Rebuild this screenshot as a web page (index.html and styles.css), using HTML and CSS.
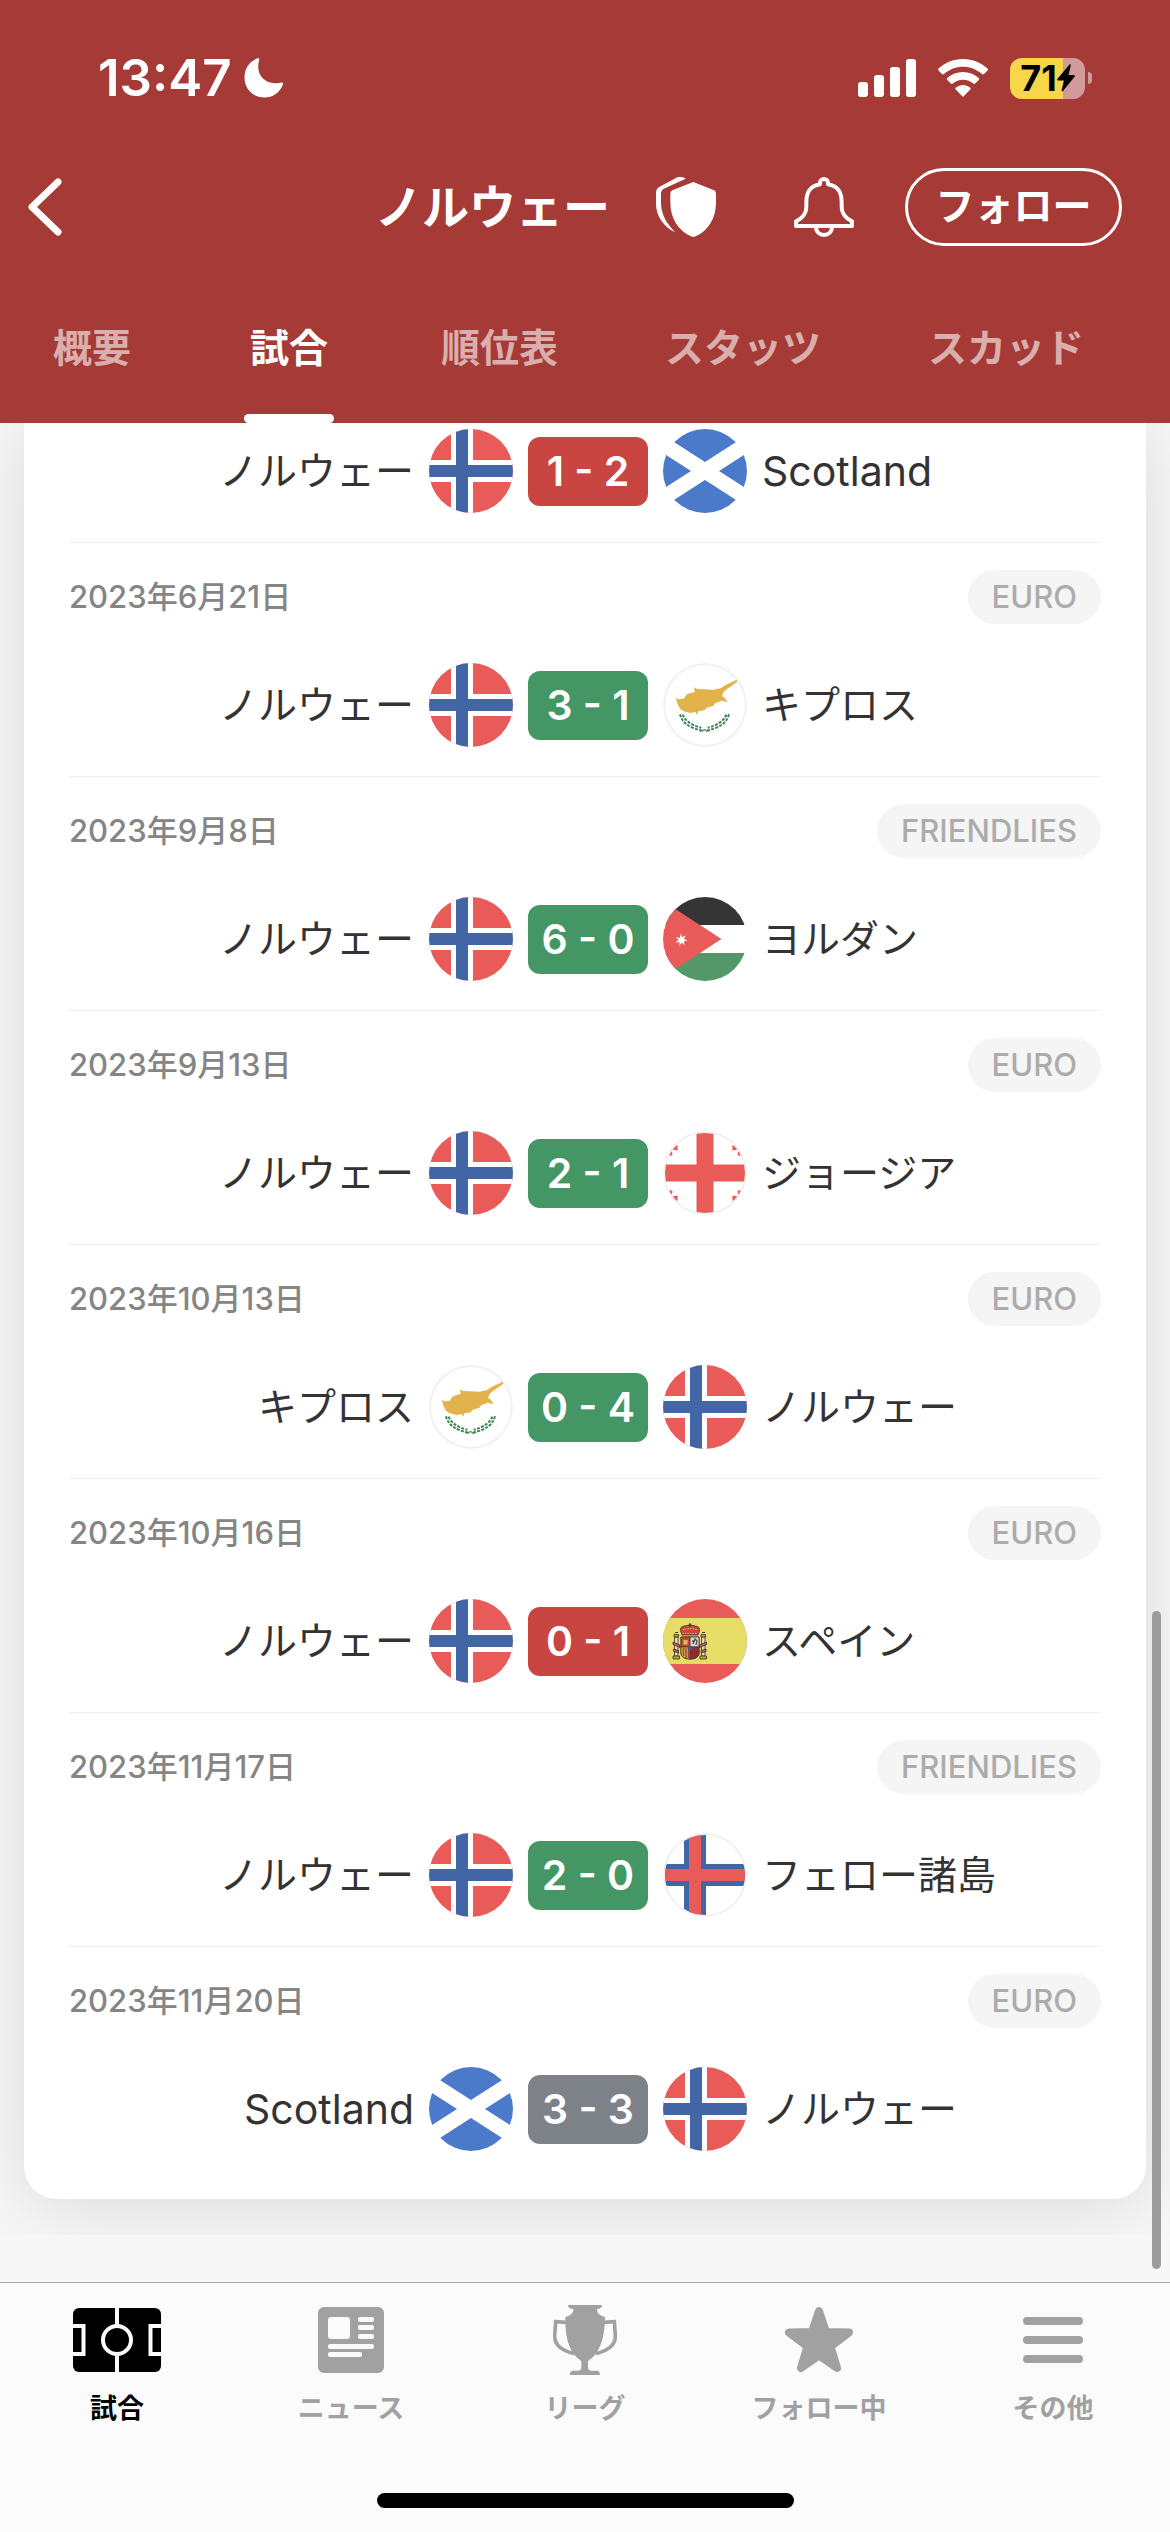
FILE: index.html
```html
<!DOCTYPE html>
<html lang="ja">
<head>
<meta charset="utf-8">
<meta name="viewport" content="width=device-width, initial-scale=1">
<title>ノルウェー - 試合</title>
<link rel="stylesheet" href="styles.css">
</head>
<body>
<svg class="sprite" aria-hidden="true">
  <defs>
    <clipPath id="disc"><circle cx="42" cy="42" r="40"/></clipPath>
    <symbol id="norway" viewBox="0 0 84 84">
      <path fill="#e95b59" d="M0 0h84v84H0z"/>
      <path fill="#fff" d="M22 0h22v84H22zM0 31h84v22H0z"/>
      <path fill="#4165a5" d="M27 0h12v84H27zM0 36h84v12H0z"/>
    </symbol>
    <symbol id="scotland" viewBox="0 0 84 84">
      <path fill="#fff" d="M0 0h84v84H0z"/>
      <path fill="#4c7acb" d="M0 0v6l42 27L84 6V0zM0 84v-6l42-27 42 27v6zM0 24l28 18L0 60zM84 24L56 42l28 18z"/>
    </symbol>
    <symbol id="cyprus" viewBox="0 0 84 84">
      <circle cx="42" cy="42" r="42" fill="#f0f0f0"/>
      <circle cx="42" cy="42" r="40" fill="#fff"/>
      <g transform="scale(.33333) translate(-88 -75)">
        <path fill="#e2b24c" d="M126 179l8 5 16-1 7-11 6-5 20-5-2-14 9 5 50 2 22-5 12-8 34-16 3 2-2 5-36 25-6 10-1 7 8 5 8 13-11-3-8-2-9 5-9 1-5 9-21 6-6 8-19 3-4 11-4-9-15 3-21-5-11-8-7-14z"/>
        <path fill="none" stroke="#3b8454" stroke-width="6" stroke-dasharray="9 4" d="M139 229C145 252 162 268 205 278M286 229C280 252 263 268 220 278"/>
        <path fill="none" stroke="#3b8454" stroke-width="6" stroke-dasharray="9 4" d="M147 230C153 247 172 262 203 269M278 230C272 247 253 262 222 269"/>
        <path fill="none" stroke="#3b8454" stroke-width="4" d="M206 281c2-8 11-8 13 0"/>
      </g>
    </symbol>
    <symbol id="jordan" viewBox="0 0 84 84">
      <path fill="#fff" d="M0 0h84v84H0z"/>
      <path fill="#353535" d="M0 0h84v28H0z"/>
      <path fill="#54986a" d="M0 56h84v28H0z"/>
      <path fill="#e95b59" d="M0 4l58.500 38L0 80z"/>
      <path fill="#fff" d="M17.700 36.500l1.400 3.700 3.700-1.800-1.900 3.600 3.800 1.500-4 .9 1.200 3.900-3.200-2.500-2.300 3.300v-4l-4 .3 3.300-2.400-2.900-2.900 4 1z"/>
    </symbol>
    <symbol id="georgia" viewBox="0 0 84 84">
      <circle cx="42" cy="42" r="42" fill="#f0f0f0"/>
      <circle cx="42" cy="42" r="40" fill="#fff"/>
      <g clip-path="url(#disc)" fill="#e95b59">
        <path d="M33.500 0h17v84h-17zM0 33.500h84v17H0z"/>
        <path id="bolnisi" d="M14.600 14v5.500L9 18.500l1.500-1.500-.5-3 2.500 1.300zM5.500 20.500l3.500.2.500 3.500-3 .8z"/>
        <use href="#bolnisi" transform="matrix(-1 0 0 1 84 0)"/>
        <use href="#bolnisi" transform="matrix(1 0 0 -1 0 84)"/>
        <use href="#bolnisi" transform="matrix(-1 0 0 -1 84 84)"/>
      </g>
    </symbol>
    <symbol id="spain" viewBox="0 0 84 84">
      <path fill="#e95b59" d="M0 0h84v84H0z"/>
      <path fill="#e6dd67" d="M0 19h84v46H0z"/>
      <g stroke="#3d3328" stroke-width=".8">
        <path fill="#d9d9d4" d="M11.500 38h3.500v19h-3.500zM38.500 38H42v19h-3.500z"/>
        <path fill="#b9a03c" d="M11 35.500h4.500V38H11zM38 35.500h4.500V38H38zM10 57h6.500v3H10zM37 57h6.500v3H37z"/>
        <path fill="#d1504c" d="M10 43l7 3v2.500l-7-3zM43.500 43l-7 3v2.500l7-3zM10.500 50l5 1.500V54l-5-1.500zM43 50l-5 1.500V54l5-1.500z"/>
        <path fill="#a5403c" d="M18 38h18v16c0 4-4 6-9 6s-9-2-9-6z"/>
        <path fill="#c9473f" d="M18 38h9v10h-9z"/>
        <path fill="#dcd3d6" d="M27 38h9v10h-9z"/>
        <path fill="#d8b04a" d="M18 48h9v12c-5 0-9-2-9-6z"/>
        <path fill="#8c2f35" d="M27 48h9v6c0 4-4 6-9 6z"/>
        <path fill="#c9473f" d="M18 33c-2-4 1-6 4-6 2-1 8-1 10 0 3 0 6 2 4 6l-1 3H19z"/>
      </g>
      <path fill="none" stroke="#a5403c" stroke-width="1.400" d="M20.500 49v8M23 49v10M25.500 49v10"/>
      <path fill="#e0bb4c" d="M20.500 41h4v4.500h-4z"/>
      <path fill="none" stroke="#5b4a58" stroke-width="1.300" d="M30 45l2-5 2 2-1 4M29 42h3"/>
      <path fill="none" stroke="#d8b04a" stroke-width="1.200" stroke-dasharray="1.500 1" d="M19.500 34.500h15M20 31c3-2 11-2 14 0"/>
      <path fill="none" stroke="#3d3328" stroke-width="1.100" d="M27 24v4M25.500 26h3M12 33.500h3M39 33.500h3"/>
      <circle cx="27" cy="49" r="2" fill="#3f5b9c"/>
    </symbol>
    <symbol id="faroe" viewBox="0 0 84 84">
      <circle cx="42" cy="42" r="42" fill="#f0f0f0"/>
      <circle cx="42" cy="42" r="40" fill="#fff"/>
      <g clip-path="url(#disc)">
        <path fill="#4165a5" d="M21 0h22v84H21zM0 31h84v22H0z"/>
        <path fill="#e95b59" d="M26 0h12v84H26zM0 36h84v12H0z"/>
      </g>
    </symbol>
  </defs>
</svg>

<header class="header">
  <div class="status">
    <div class="status-group">
      <span class="clock">13:47</span>
      <svg class="moon" viewBox="0 0 40 40" aria-hidden="true"><path fill="#fff" d="M13.500.3c1.300-.5 2.200.4 1.700 1.700C11 15.500 20 28 36.500 24.700c1.900-.4 2.900.5 2.300 2C35.500 35 28.500 39.500 20.500 39.500 9 39.500.5 31 .5 19.500.5 10.500 5.500 3.300 13.500.3z"/></svg>
    </div>
    <div class="status-group status-right">
      <svg class="signal" viewBox="0 0 58 38" aria-hidden="true"><g fill="#fff"><rect y="23" width="10" height="15" rx="3"/><rect x="16" y="16" width="10" height="22" rx="3"/><rect x="32" y="8" width="10" height="30" rx="3"/><rect x="48" width="10" height="38" rx="3"/></g></svg>
      <svg class="wifi" viewBox="0 0 50 38" aria-hidden="true"><g fill="#fff"><path d="M25 0C34.500 0 43 3.700 49.500 9.500q.8 1 0 2L46 15q-1 .8-2 0C38.500 10.200 32 7.700 25 7.700S11.500 10.200 6 15q-1 .8-2 0L.5 11.500q-.8-1 0-2C7 3.700 15.500 0 25 0z"/><path d="M25 13c6 0 11.500 2.200 15.700 6 .7.700.7 1.300 0 2l-3.500 3.500q-1 .8-2 0C32.500 22 29 20.700 25 20.700s-7.500 1.300-10.200 3.800q-1 .8-2 0L9.300 21c-.7-.7-.7-1.300 0-2C13.500 15.200 19 13 25 13z"/><path d="M25 26c2.700 0 5 .9 7 2.500.8.700.8 1.300.2 2L26 37q-1 1-2 0l-6.200-6.500c-.6-.7-.6-1.300.2-2C20 26.900 22.300 26 25 26z"/></g></svg>
      <div class="battery">
        <div class="battery-body">
          <span>71</span>
          <svg class="bolt" viewBox="0 0 18 28" aria-hidden="true"><path d="M12.500.5c.8-.8 1.600-.2 1.300.8L11.500 11h5.200c1.200 0 1.600.8.900 1.800L6 27c-.8.900-1.700.3-1.400-.8L7 16.500H1.500C.3 16.500-.2 15.600.5 14.700z"/></svg>
        </div>
        <div class="battery-nub"></div>
      </div>
    </div>
  </div>

  <div class="titlebar">
    <button class="icon-button back" aria-label="戻る"><svg viewBox="0 0 34 58" aria-hidden="true"><path d="M30 4L4 29l26 25" fill="none" stroke="#fff" stroke-width="7" stroke-linecap="round" stroke-linejoin="round"/></svg></button>
    <h1>ノルウェー</h1>
    <button class="icon-button shield" aria-label="チーム"><svg viewBox="48 81 180 180" aria-hidden="true"><g fill="#fff"><path d="M160 96l62 25q6 3 6 10v27c0 46-24 84-61 101q-7 3-14 0c-38-17-62-55-62-101v-27q0-7 6-10z"/><path d="M112 82c10-3 19 0 25 4l-67 31q-7 4-7 12v33c2 34 18 61 43 85-34-16-58-48-58-86v-35q0-9 8-14z"/></g></svg></button>
    <button class="icon-button bell" aria-label="通知"><svg viewBox="462 81 180 180" aria-hidden="true"><g fill="none" stroke="#fff" stroke-width="12"><path d="M468 228h168v-14c-18-8-31-24-31-42v-15c0-34-13-49-41-54v-4c0-16-24-16-24 0v4c-28 5-41 20-41 54v15c0 18-13 34-31 42z" stroke-linejoin="round"/><path d="M528 230c0 33 48 33 48 0"/></g><path d="M547 108v-8c0-6 10-6 10 0v8z" fill="#a53a37"/></svg></button>
    <button class="follow">フォロー</button>
  </div>

  <nav class="tabs" aria-label="チーム">
    <a href="#overview">概要</a>
    <a href="#matches" class="active" aria-current="page">試合</a>
    <a href="#table">順位表</a>
    <a href="#stats">スタッツ</a>
    <a href="#squad">スカッド</a>
  </nav>
</header>

<main class="content" id="matches">
  <div class="card-wrap">
    <ul class="card">
      <li class="match">
        <div class="teams">
          <span class="team home">ノルウェー</span><svg class="flag" aria-hidden="true"><use href="#norway"/></svg>
          <span class="score loss">1 - 2</span>
          <svg class="flag" aria-hidden="true"><use href="#scotland"/></svg><span class="team latin" lang="en">Scotland</span>
        </div>
      </li>
      <li class="match">
        <div class="meta"><time datetime="2023-06-21">2023年6月21日</time><span class="league">EURO</span></div>
        <div class="teams">
          <span class="team home">ノルウェー</span><svg class="flag" aria-hidden="true"><use href="#norway"/></svg>
          <span class="score win">3 - 1</span>
          <svg class="flag" aria-hidden="true"><use href="#cyprus"/></svg><span class="team">キプロス</span>
        </div>
      </li>
      <li class="match">
        <div class="meta"><time datetime="2023-09-08">2023年9月8日</time><span class="league">FRIENDLIES</span></div>
        <div class="teams">
          <span class="team home">ノルウェー</span><svg class="flag" aria-hidden="true"><use href="#norway"/></svg>
          <span class="score win">6 - 0</span>
          <svg class="flag" aria-hidden="true"><use href="#jordan"/></svg><span class="team">ヨルダン</span>
        </div>
      </li>
      <li class="match">
        <div class="meta"><time datetime="2023-09-13">2023年9月13日</time><span class="league">EURO</span></div>
        <div class="teams">
          <span class="team home">ノルウェー</span><svg class="flag" aria-hidden="true"><use href="#norway"/></svg>
          <span class="score win">2 - 1</span>
          <svg class="flag" aria-hidden="true"><use href="#georgia"/></svg><span class="team">ジョージア</span>
        </div>
      </li>
      <li class="match">
        <div class="meta"><time datetime="2023-10-13">2023年10月13日</time><span class="league">EURO</span></div>
        <div class="teams">
          <span class="team home">キプロス</span><svg class="flag" aria-hidden="true"><use href="#cyprus"/></svg>
          <span class="score win">0 - 4</span>
          <svg class="flag" aria-hidden="true"><use href="#norway"/></svg><span class="team">ノルウェー</span>
        </div>
      </li>
      <li class="match">
        <div class="meta"><time datetime="2023-10-16">2023年10月16日</time><span class="league">EURO</span></div>
        <div class="teams">
          <span class="team home">ノルウェー</span><svg class="flag" aria-hidden="true"><use href="#norway"/></svg>
          <span class="score loss">0 - 1</span>
          <svg class="flag" aria-hidden="true"><use href="#spain"/></svg><span class="team">スペイン</span>
        </div>
      </li>
      <li class="match">
        <div class="meta"><time datetime="2023-11-17">2023年11月17日</time><span class="league">FRIENDLIES</span></div>
        <div class="teams">
          <span class="team home">ノルウェー</span><svg class="flag" aria-hidden="true"><use href="#norway"/></svg>
          <span class="score win">2 - 0</span>
          <svg class="flag" aria-hidden="true"><use href="#faroe"/></svg><span class="team">フェロー諸島</span>
        </div>
      </li>
      <li class="match">
        <div class="meta"><time datetime="2023-11-20">2023年11月20日</time><span class="league">EURO</span></div>
        <div class="teams">
          <span class="team home latin" lang="en">Scotland</span><svg class="flag" aria-hidden="true"><use href="#scotland"/></svg>
          <span class="score draw">3 - 3</span>
          <svg class="flag" aria-hidden="true"><use href="#norway"/></svg><span class="team">ノルウェー</span>
        </div>
      </li>
    </ul>
  </div>
  <div class="scroll-thumb"></div>
</main>

<footer class="bottom">
  <nav class="bottom-nav" aria-label="メイン">
    <a href="#matches" class="active" aria-current="page">
      <svg width="88" height="64" viewBox="0 0 88 64" aria-hidden="true"><rect width="88" height="64" rx="6"/><g fill="none" stroke="#fbfbfb" stroke-width="4"><path d="M44 0v18M44 46v18M0 18h10.500v28H0M88 18H77.500v28H88"/><circle cx="44" cy="32" r="14"/></g></svg>
      <span>試合</span>
    </a>
    <a href="#news">
      <svg width="66" height="66" viewBox="0 0 66 66" aria-hidden="true"><rect width="66" height="66" rx="6" fill="#a1a1a1"/><g fill="#fbfbfb"><rect x="10" y="10" width="22" height="22" rx="3"/><rect x="40" y="10" width="16" height="5" rx="2"/><rect x="40" y="18" width="16" height="5" rx="2"/><rect x="40" y="27" width="16" height="5" rx="2"/><rect x="10" y="37" width="46" height="5" rx="2"/><rect x="10" y="45" width="34" height="5" rx="2"/></g></svg>
      <span>ニュース</span>
    </a>
    <a href="#league">
      <svg width="64" height="70" viewBox="63 42 192 210" aria-hidden="true"><path fill="#a1a1a1" d="M108 42h102c0 8-6 12-15 12 0 14 9 20 24 24v10c-2 40-8 70-25 97-9 12-14 16-26 25v20c0 6 4 8 12 9h18q5 3 6 13h-91q1-10 6-13h18c7-1 11-3 11-9v-20c-12-9-17-13-26-25-16-27-22-57-22-97V78c15-4 24-10 24-24-10 0-16-4-16-12z"/><path fill="none" stroke="#a1a1a1" stroke-width="11" d="M104 94l-33-2-3 42c-1 28 19 44 58 54M214 94l33-2 3 42c1 28-19 44-58 54"/></svg>
      <span>リーグ</span>
    </a>
    <a href="#following">
      <svg width="70" height="68" viewBox="0 0 70 68" aria-hidden="true"><path fill="#a1a1a1" stroke="#a1a1a1" stroke-width="8" stroke-linejoin="round" d="M35 5l7 21 23 .5-18.500 14L53 62 35 49.500 17 62l6.500-21.500L5 26.500l23-.5z"/></svg>
      <span>フォロー中</span>
    </a>
    <a href="#more">
      <svg width="60" height="48" viewBox="0 0 60 48" aria-hidden="true"><path stroke="#a1a1a1" stroke-width="8" stroke-linecap="round" d="M4 5h52M4 24h52M4 43h52"/></svg>
      <span>その他</span>
    </a>
  </nav>
  <div class="home-indicator"></div>
</footer>
</body>
</html>
```
FILE: styles.css
```css
* {
  box-sizing: border-box;
}

body {
  margin: 0;
  min-height: 100vh;
  display: flex;
  flex-direction: column;
  background: #f7f7f7;
  color: #333;
  font-family: Inter, "Noto Sans CJK JP", sans-serif;
}

a {
  color: inherit;
  text-decoration: none;
}

button {
  margin: 0;
  padding: 0;
  border: 0;
  background: none;
  color: inherit;
  font: inherit;
}

svg {
  display: block;
}

.sprite {
  position: absolute;
  width: 0;
  height: 0;
}

/* Header */

.header {
  background: #a53a37;
  color: #fff;
}

.status {
  display: flex;
  justify-content: space-between;
  align-items: center;
  height: 156px;
  padding: 0 78px 0 98px;
}

.status-group {
  display: flex;
  align-items: center;
  gap: 12px;
}

.status-right {
  gap: 22px;
}

.clock {
  font-size: 51px;
  font-weight: 600;
  line-height: 60px;
}

.moon {
  width: 40px;
  height: 40px;
}

.signal {
  width: 58px;
  height: 38px;
}

.wifi {
  width: 50px;
  height: 38px;
}

.battery {
  display: flex;
  align-items: center;
  gap: 3px;
}

.battery-body {
  display: flex;
  align-items: center;
  justify-content: center;
  width: 75px;
  height: 41px;
  border-radius: 12px;
  background: linear-gradient(to right, #f8d64a 71%, #d29b9b 71%);
  color: #000;
  font-size: 36px;
  font-weight: 700;
  line-height: 41px;
}

.bolt {
  width: 18px;
  height: 28px;
}

.battery-nub {
  width: 4px;
  height: 12px;
  border-radius: 0 4px 4px 0;
  background: #d29b9b;
}

.titlebar {
  display: flex;
  align-items: center;
  height: 102px;
  padding: 0 48px 0 28px;
}

.icon-button {
  flex: none;
  width: 60px;
  height: 60px;
}

.icon-button svg {
  width: 100%;
  height: 100%;
}

.back {
  width: 34px;
}

.titlebar h1 {
  margin: 0 46px 0 auto;
  font-size: 47px;
  font-weight: 600;
  line-height: 60px;
}

.bell {
  margin: 0 51px 0 78px;
}

.follow {
  width: 217px;
  height: 78px;
  padding-bottom: 2px;
  border: 3px solid #fff;
  border-radius: 39px;
  font-size: 39px;
  font-weight: 600;
  line-height: 60px;
}

.tabs {
  display: flex;
  gap: 107px;
  height: 165px;
  padding-left: 47px;
  overflow: hidden;
  font-size: 39px;
  font-weight: 600;
  line-height: 60px;
  text-align: center;
  white-space: nowrap;
}

.tabs a {
  display: flex;
  flex: none;
  flex-direction: column;
  justify-content: space-between;
  min-width: 90px;
  padding-top: 60px;
  color: rgba(255, 255, 255, 0.6);
}

.tabs .active {
  color: #fff;
}

.tabs .active::after {
  content: "";
  height: 9px;
  border-radius: 5px;
  background: #fff;
}

/* Match list */

.content {
  position: relative;
  flex: 1;
}

.card-wrap {
  padding: 0 24px 36px;
  overflow: hidden;
}

.card {
  margin: 0;
  padding: 0 45px;
  list-style: none;
  background: #fff;
  border-radius: 0 0 33px 33px;
  box-shadow: 0 6px 72px rgba(0, 0, 0, 0.12);
}

.match {
  padding: 27px 0 29px;
  border-bottom: 1px solid #eee;
}

.match:first-child {
  padding-top: 6px;
}

.match:last-child {
  padding-bottom: 48px;
  border-bottom: 0;
}

.meta {
  display: flex;
  justify-content: space-between;
  align-items: center;
  margin-bottom: 39px;
  font-size: 31px;
  font-weight: 500;
  line-height: 54px;
  color: #858585;
}

.league {
  padding: 0 24px;
  border-radius: 27px;
  background: #f5f5f5;
  color: #acacac;
}

.teams {
  display: grid;
  grid-template-columns: 1fr 84px 120px 84px 1fr;
  gap: 15px;
  align-items: center;
  height: 84px;
  padding-left: 6px;
}

.team {
  font-size: 39px;
  line-height: 60px;
  white-space: nowrap;
}

.latin {
  font-size: 41px;
}

.home {
  text-align: right;
}

.flag {
  width: 84px;
  height: 84px;
  border-radius: 50%;
}

.score {
  border-radius: 12px;
  color: #fff;
  font-size: 41px;
  font-weight: 600;
  line-height: 69px;
  text-align: center;
}

.win {
  background: #449665;
}

.loss {
  background: #c84542;
}

.draw {
  background: #7d8289;
}

.scroll-thumb {
  position: absolute;
  right: 9px;
  bottom: 13px;
  width: 9px;
  height: 37%;
  max-height: 658px;
  border-radius: 5px;
  background: #9c9c9c;
}

/* Bottom navigation */

.bottom {
  padding-bottom: 24px;
  border-top: 1px solid #aaa;
  background: #fbfbfb;
}

.bottom-nav {
  display: grid;
  grid-template-columns: repeat(5, 1fr);
  height: 210px;
  padding-top: 18px;
}

.bottom-nav a {
  display: grid;
  grid-template-rows: 78px 40px;
  gap: 10px;
  align-content: start;
  align-items: center;
  justify-items: center;
  color: #a1a1a1;
  font-size: 27px;
  font-weight: 600;
  line-height: 40px;
  white-space: nowrap;
}

.bottom-nav .active {
  color: #000;
}

.home-indicator {
  width: 417px;
  height: 15px;
  margin: 0 auto;
  border-radius: 8px;
  background: #000;
}
```
